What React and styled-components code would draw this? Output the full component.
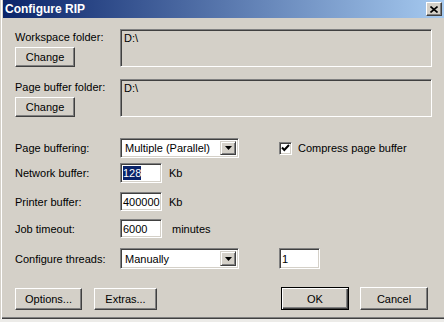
import React from 'react';
import styled, { createGlobalStyle } from 'styled-components';

const GlobalStyle = createGlobalStyle`
  html, body {
    margin: 0;
    padding: 0;
    background: #ecebe8;
  }
  body {
    font-family: "Liberation Sans", Arial, sans-serif;
    font-size: 11px;
    color: #000;
  }
`;

const Window = styled.div`
  width: 444px;
  height: 319px;
  box-sizing: border-box;
  background: #d4d0c8;
  border-left: 1px solid #d4d0c8;
  box-shadow: inset 1px 0 #ffffff, inset 0 -1px #404040, inset 0 -2px #808080;
  padding-left: 2px;
  display: flex;
  flex-direction: column;
`;

const TitleBar = styled.div`
  height: 18px;
  display: flex;
  align-items: center;
  justify-content: space-between;
  padding: 0 2px 0 2px;
  background: linear-gradient(to right, #0a246a, #a6caf0);
  color: #fff;
  font-weight: bold;
  font-size: 12px;
`;

const CloseButton = styled.div`
  width: 16px;
  height: 14px;
  box-sizing: border-box;
  background: #d4d0c8;
  border: 1px solid;
  border-color: #fff #404040 #404040 #fff;
  box-shadow: inset -1px -1px #808080;
  display: flex;
  align-items: center;
  justify-content: center;
`;

const Body = styled.div`
  padding: 11px 12px 0 12px;
  display: flex;
  flex-direction: column;
`;

const FolderRow = styled.div`
  display: flex;
  margin-top: ${p => p.$top || 0}px;
`;

const FolderSide = styled.div`
  width: 105px;
  height: 38px;
  display: flex;
  flex-direction: column;
  justify-content: space-between;
`;

const Label = styled.div`
  width: 105px;
  flex-shrink: 0;
  white-space: nowrap;
  padding-top: ${p => p.$pad || 0}px;
`;

const FolderBox = styled.div`
  flex: 1;
  height: 38px;
  box-sizing: border-box;
  padding: 2px 3px;
  border: 1px solid;
  border-color: #808080 #ffffff #ffffff #808080;
  box-shadow: inset 1px 1px #404040, inset -1px -1px #d4d0c8;
`;

const Button = styled.div`
  width: ${p => p.$w}px;
  height: ${p => p.$h || 20}px;
  box-sizing: border-box;
  display: flex;
  align-items: center;
  justify-content: center;
  border: 1px solid;
  border-color: #ffffff #404040 #404040 #ffffff;
  box-shadow: inset -1px -1px #808080, inset 1px 1px #d4d0c8;
  background: #d4d0c8;
  ${p => p.$default && `
    border: 1px solid #000;
    box-shadow: inset 1px 1px #fff, inset -1px -1px #404040, inset -2px -2px #808080;
  `}
`;

const Row = styled.div`
  display: flex;
  align-items: center;
  height: ${p => p.$h || 20}px;
  margin-top: ${p => p.$top || 0}px;
`;

const Sunken = styled.div`
  box-sizing: border-box;
  width: ${p => p.$w}px;
  height: ${p => p.$h || 20}px;
  background: #fff;
  border: 1px solid;
  border-color: #808080 #ffffff #ffffff #808080;
  box-shadow: inset 1px 1px #404040, inset -1px -1px #d4d0c8;
  display: flex;
  align-items: center;
  padding-left: 2px;
`;

const SelectText = styled.div`
  flex: 1;
  padding-left: 2px;
`;

const DropButton = styled.div`
  width: 16px;
  height: calc(100% - 4px);
  margin-right: 2px;
  box-sizing: border-box;
  border: 1px solid;
  border-color: #d4d0c8 #404040 #404040 #d4d0c8;
  box-shadow: inset 1px 1px #fff, inset -1px -1px #808080;
  background: #d4d0c8;
  display: flex;
  align-items: center;
  justify-content: center;
`;

const Highlight = styled.span`
  background: #0a246a;
  color: #fff;
  padding: 1px 0;
`;

const Unit = styled.div`
  margin-left: ${p => p.$gap}px;
`;

const CheckWrap = styled.div`
  display: flex;
  align-items: center;
  margin-left: 40px;
  gap: 6px;
`;

const CheckBox = styled.div`
  width: 13px;
  height: 13px;
  box-sizing: border-box;
  background: #fff;
  border: 1px solid;
  border-color: #808080 #ffffff #ffffff #808080;
  box-shadow: inset 1px 1px #404040, inset -1px -1px #d4d0c8;
  display: flex;
  align-items: center;
  justify-content: center;
`;

const ButtonRow = styled.div`
  display: flex;
  align-items: center;
  justify-content: space-between;
  margin-top: 18px;
  padding-right: 4px;
`;

const ButtonGroup = styled.div`
  display: flex;
  gap: ${p => p.$gap}px;
`;

function Arrow() {
  return (
    <svg width="7" height="4" viewBox="0 0 7 4">
      <path d="M0 0h7L3.5 4z" fill="#000" />
    </svg>
  );
}

function Select({ value, w, h }) {
  return (
    <Sunken $w={w} $h={h}>
      <SelectText>{value}</SelectText>
      <DropButton><Arrow /></DropButton>
    </Sunken>
  );
}

function App() {
  return (
    <>
      <GlobalStyle />
      <Window>
        <TitleBar>
          <span>Configure RIP</span>
          <CloseButton>
            <svg width="8" height="7" viewBox="0 0 8 7">
              <path d="M0.5 0.5L7.5 6.5M7.5 0.5L0.5 6.5" stroke="#000" strokeWidth="1.6" />
            </svg>
          </CloseButton>
        </TitleBar>
        <Body>
          <FolderRow>
            <FolderSide>
              <Label $pad={2}>Workspace folder:</Label>
              <Button $w={60}>Change</Button>
            </FolderSide>
            <FolderBox>D:\</FolderBox>
          </FolderRow>
          <FolderRow $top={12}>
            <FolderSide>
              <Label $pad={2}>Page buffer folder:</Label>
              <Button $w={60}>Change</Button>
            </FolderSide>
            <FolderBox>D:\</FolderBox>
          </FolderRow>

          <Row $top={21}>
            <Label>Page buffering:</Label>
            <Select value="Multiple (Parallel)" w={119} />
            <CheckWrap>
              <CheckBox>
                <svg width="9" height="8" viewBox="0 0 9 8">
                  <path d="M1 3.5L3.3 6L8 1" stroke="#000" strokeWidth="2" fill="none" />
                </svg>
              </CheckBox>
              <span>Compress page buffer</span>
            </CheckWrap>
          </Row>
          <Row $top={5}>
            <Label>Network buffer:</Label>
            <Sunken $w={42}><Highlight>128</Highlight></Sunken>
            <Unit $gap={7}>Kb</Unit>
          </Row>
          <Row $top={9} $h={19}>
            <Label>Printer buffer:</Label>
            <Sunken $w={42} $h={19}>400000</Sunken>
            <Unit $gap={7}>Kb</Unit>
          </Row>
          <Row $top={8} $h={19}>
            <Label>Job timeout:</Label>
            <Sunken $w={42} $h={19}>6000</Sunken>
            <Unit $gap={10}>minutes</Unit>
          </Row>
          <Row $top={10} $h={21}>
            <Label>Configure threads:</Label>
            <Select value="Manually" w={119} h={21} />
            <Unit $gap={40}>
              <Sunken $w={41} $h={21}>1</Sunken>
            </Unit>
          </Row>

          <ButtonRow>
            <ButtonGroup $gap={12}>
              <Button $w={67} $h={22}>Options...</Button>
              <Button $w={63} $h={22}>Extras...</Button>
            </ButtonGroup>
            <ButtonGroup $gap={11}>
              <Button $w={68} $h={23} $default>OK</Button>
              <Button $w={68} $h={23}>Cancel</Button>
            </ButtonGroup>
          </ButtonRow>
        </Body>
      </Window>
    </>
  );
}

export default App;
